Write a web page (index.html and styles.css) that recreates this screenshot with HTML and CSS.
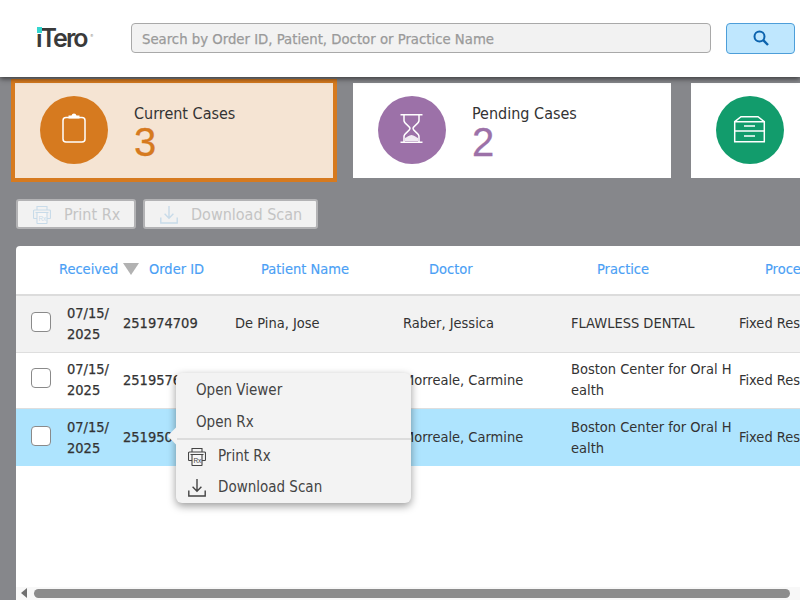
FILE: index.html
```html
<!DOCTYPE html>
<html lang="en">
<head>
<meta charset="utf-8">
<title>iTero Orders</title>
<link rel="stylesheet" href="styles.css">
</head>
<body>
<svg class="defs" width="0" height="0" aria-hidden="true">
  <symbol id="i-print" viewBox="0 0 18 19">
    <path d="M4 5V1.500h10V5M4 13.500H1.200a.7.7 0 0 1-.7-.7V6a1 1 0 0 1 1-1h15a1 1 0 0 1 1 1v6.800a.7.7 0 0 1-.7.7H14M2.500 7.500h13" fill="none" stroke="currentColor" stroke-width="1.100"/>
    <rect x="4" y="7.500" width="10" height="11" rx=".6" fill="#fff" fill-opacity=".35" stroke="currentColor" stroke-width="1.100"/>
    <text x="5.400" y="15.500" class="rx">Rx</text>
  </symbol>
  <symbol id="i-down" viewBox="0 0 18 19">
    <path d="M9 1v12M4.600 8.800 9 13.200l4.400-4.400M.8 12.500v5.500h16.400v-5.500" fill="none" stroke="currentColor" stroke-width="1.400"/>
  </symbol>
</svg>

<header class="topbar">
  <div class="logo"><span class="logo-dot"></span><span class="logo-text">iTero</span><span class="logo-mark">®</span></div>
  <input class="search" type="text" placeholder="Search by Order ID, Patient, Doctor or Practice Name">
  <button class="search-btn" type="button" aria-label="Search">
    <svg width="16" height="16" viewBox="0 0 16 16"><circle cx="6.500" cy="6.500" r="5" fill="none" stroke="currentColor" stroke-width="2"/><path d="m10.200 10.200 4.800 4.800" stroke="currentColor" stroke-width="2.400"/></svg>
  </button>
</header>

<section class="cards">
  <div class="card card-current">
    <svg class="badge badge-orange" viewBox="0 0 68 68"><rect x="23" y="21.500" width="22" height="24.500" rx="3" fill="none" stroke="#fff" stroke-width="1.500"/><path d="M28.500 22.500v-3h3a2.600 2.600 0 0 1 5 0h3v3z" fill="#fff"/></svg>
    <div class="card-text"><div class="card-label">Current Cases</div><div class="card-count count-orange">3</div></div>
  </div>
  <div class="card">
    <svg class="badge badge-purple" viewBox="0 0 68 68"><path d="M22.500 18.800h22M22.500 46.200h22M26 19v5.500c0 3.500 6 5.500 6 8s-6 4.500-6 8V46M41 19v5.500c0 3.500-6 5.500-6 8s6 4.500 6 8V46" fill="none" stroke="#fff" stroke-width="1.500"/><path d="M27 45v-3c2-.5 4-3 6.500-3s4.500 2.500 6.500 3v3z" fill="#fff" fill-opacity=".85"/></svg>
    <div class="card-text"><div class="card-label">Pending Cases</div><div class="card-count count-purple">2</div></div>
  </div>
  <div class="card">
    <svg class="badge badge-green" viewBox="0 0 68 68"><path d="M18.700 25.700V45.700H48.300V25.700L42 20.700H25ZM18.700 25.700H48.300M18.700 35H48.300M28 30H39M28 40H39" fill="none" stroke="#fff" stroke-width="1.500"/></svg>
  </div>
</section>

<div class="actions">
  <button class="action action-print" type="button"><svg class="action-icon"><use href="#i-print"/></svg>Print Rx</button>
  <button class="action action-download" type="button"><svg class="action-icon"><use href="#i-down"/></svg>Download Scan</button>
</div>

<section class="table">
  <div class="row head">
    <div></div>
    <div class="th th-received">Received<span class="sort"></span></div>
    <div class="th">Order ID</div>
    <div class="th">Patient Name</div>
    <div class="th">Doctor</div>
    <div class="th">Practice</div>
    <div class="th">Procedure</div>
  </div>
  <div class="row body-row alt">
    <div class="cell-check"><span class="check"></span></div>
    <div class="date">07/15/<wbr>2025</div><div class="order">251974709</div><div>De Pina, Jose</div><div>Raber, Jessica</div><div class="practice">FLAWLESS DENTAL</div><div class="nowrap">Fixed Restoration</div>
  </div>
  <div class="row body-row">
    <div class="cell-check"><span class="check"></span></div>
    <div class="date">07/15/<wbr>2025</div><div class="order">251957612</div><div></div><div>Morreale, Carmine</div><div class="practice">Boston Center for Oral H<wbr>ealth</div><div class="nowrap">Fixed Restoration</div>
  </div>
  <div class="row body-row selected">
    <div class="cell-check"><span class="check"></span></div>
    <div class="date">07/15/<wbr>2025</div><div class="order">251950344</div><div></div><div>Morreale, Carmine</div><div class="practice">Boston Center for Oral H<wbr>ealth</div><div class="nowrap">Fixed Restoration</div>
  </div>
  <div class="table-fill"></div>
  <div class="hscroll"><span class="hscroll-arrow"></span><span class="hscroll-thumb"></span></div>
</section>

<nav class="menu">
  <div class="menu-item">Open Viewer</div>
  <div class="menu-item">Open Rx</div>
  <div class="menu-sep"></div>
  <div class="menu-item menu-icon-item menu-print"><svg class="menu-icon"><use href="#i-print"/></svg>Print Rx</div>
  <div class="menu-item menu-icon-item"><svg class="menu-icon"><use href="#i-down"/></svg>Download Scan</div>
</nav>
</body>
</html>
```
FILE: styles.css
```css
html, body { margin: 0; height: 100%; overflow: hidden; }
body {
  width: 800px; height: 600px;
  background: #86878b;
  display: flex; flex-direction: column;
  font-family: "DejaVu Sans", sans-serif;
  font-stretch: condensed;
  font-size: 14.500px; color: #333;
  position: relative;
}
.defs { position: absolute; }
.rx { font: 6.500px "Liberation Sans", sans-serif; fill: currentColor; }

.topbar {
  height: 77px; flex: none; background: #fff;
  display: flex; align-items: center;
  box-shadow: 0 2px 5px rgba(0,0,0,.55);
  position: relative; z-index: 2;
}
.logo { width: 131px; flex: none; padding-left: 36px; box-sizing: border-box; position: relative; height: 40px; display: flex; align-items: center; }
.logo-text { font-family: Inter, sans-serif; font-stretch: normal; font-weight: 600; font-size: 25px; letter-spacing: -2px; color: #3a3a3a; line-height: 1; }
.logo-dot { position: absolute; left: 37px; top: 8px; width: 5px; height: 6px; background: #35d6d0; box-shadow: 0 -1px 0 #fff, 0 1px 0 #fff; }
.logo-mark { position: absolute; left: 90px; top: 14px; font-size: 4px; color: #777; }
.search {
  width: 580px; height: 30px; box-sizing: border-box; margin: -1px 0 0;
  background: #f2f2f2; border: 1px solid #a9a9a9; border-radius: 4px;
  padding: 1px 10px 0; font-family: "DejaVu Sans", sans-serif; font-stretch: condensed; font-size: 14.750px; outline: none;
  -webkit-text-stroke: .25px #9a9a9a;
}
.search::placeholder { color: #9a9a9a; opacity: 1; }
.search-btn {
  width: 69px; height: 31px; margin: -1px 0 0 15px; padding: 0;
  background: #bfe7fe; border: 1px solid #4d9ed9; border-radius: 4px; color: #0b63ae;
  display: flex; align-items: center; justify-content: center;
}

.cards { display: flex; gap: 20px; margin: 6px 0 0 15px; flex: none; }
.card {
  width: 318px; height: 95px; flex: none; background: #fff;
  display: flex; align-items: center; padding-left: 25px; box-sizing: border-box;
}
.card-current { background: #f5e4d3; outline: 4px solid #d67a1f; }
.badge { width: 68px; height: 68px; border-radius: 50%; flex: none; margin-top: -1px; }
.badge-orange { background: #d67a1f; }
.badge-purple { background: #9c71a8; }
.badge-green { background: #129c6c; }
.card-text { margin-left: 26px; padding-top: 3px; }
.card-label { font-size: 16px; line-height: 20px; color: #333; }
.card-count { font-family: "Liberation Sans", sans-serif; font-stretch: normal; font-size: 40px; line-height: 36px; height: 36px; -webkit-text-stroke: .3px currentColor; }
.count-orange { color: #d67a1f; }
.count-purple { color: #9c71a8; }

.actions { display: flex; gap: 7px; margin: 21px 0 0 16px; flex: none; }
.action {
  height: 30px; box-sizing: border-box; padding: 1px 0 0; display: flex; align-items: center;
  background: #f2f2f2; border: 2px solid #b3b3b5; border-radius: 3px;
  font-family: "DejaVu Sans", sans-serif; font-stretch: condensed; font-size: 16px; color: #c4c4c4;
}
.action-print { width: 120px; padding-left: 15px; }
.action-download { width: 175px; padding-left: 15px; }
.action-icon { width: 18px; height: 19px; color: #c8dbe9; margin-right: 13px; }

.table {
  flex: 1; min-height: 0; margin: 17px 0 0 16px; background: #fff; border-radius: 4px 0 0 0;
  display: flex; flex-direction: column; overflow: hidden;
}
.row {
  display: grid; grid-template-columns: 51px 56px 112px 168px 168px 168px 168px;
  align-items: center; flex: none; width: 891px;
  border-bottom: 1px solid #dedede; box-sizing: border-box;
}
.head { height: 50px; border-bottom: 2px solid #dcdcdc; }
.th { color: #4b9ff5; padding-left: 26px; white-space: nowrap; padding-bottom: 2px; -webkit-text-stroke: .15px #4b9ff5; }
.th-received { padding-left: 0; margin-left: -8px; display: flex; align-items: center; }
.sort { width: 0; height: 0; border: 8px solid transparent; border-top: 12px solid #b2b2b2; border-bottom: 0; margin-left: 5px; }
.body-row { height: 56.670px; line-height: 21px; }
.alt { background: #f2f2f2; }
.selected { background: #aee4fe; border-bottom: 0; }
.cell-check { padding-left: 15px; padding-bottom: 4px; display: flex; }
.check { width: 20px; height: 20px; box-sizing: border-box; background: #fff; border: 1px solid #8a8a8a; border-radius: 4px; }
.date, .order { -webkit-text-stroke: .25px #333; }
.date { padding-right: 2px; }
.practice { padding-right: 4px; }
.nowrap { white-space: nowrap; }
.table-fill { flex: 1; }
.hscroll { height: 13px; flex: none; background: #f8f8f8; display: flex; align-items: center; padding-bottom: 1px; box-sizing: border-box; }
.hscroll-arrow { width: 0; height: 0; border: 5px solid transparent; border-right: 6px solid #707070; border-left: 0; margin-left: 5px; }
.hscroll-thumb { width: 756px; height: 9px; border-radius: 5px; background: #8c8c8c; margin-left: 7px; }

.menu {
  position: absolute; left: 176px; top: 373px; width: 235px; height: 130px; box-sizing: border-box;
  background: #f3f3f3; border-radius: 6px; box-shadow: 0 3px 8px rgba(0,0,0,.4); z-index: 3;
  padding-top: 1px; font-size: 15px; color: #444;
}
.menu::before {
  content: ""; position: absolute; left: -6px; top: 57px; width: 12px; height: 12px;
  background: #f3f3f3; transform: rotate(45deg);
}
.menu-item { height: 32px; line-height: 32px; padding-left: 20px; position: relative; }
.menu-sep { height: 2px; background: #dcdcdc; margin: 0 0 0 1px; position: relative; }
.menu-icon-item { padding-left: 12px; height: 31px; line-height: 31px; display: flex; align-items: center; }
.menu-print { margin-top: 1px; }
.menu-icon { width: 18px; height: 19px; margin-right: 12px; color: #444; flex: none; }
```
